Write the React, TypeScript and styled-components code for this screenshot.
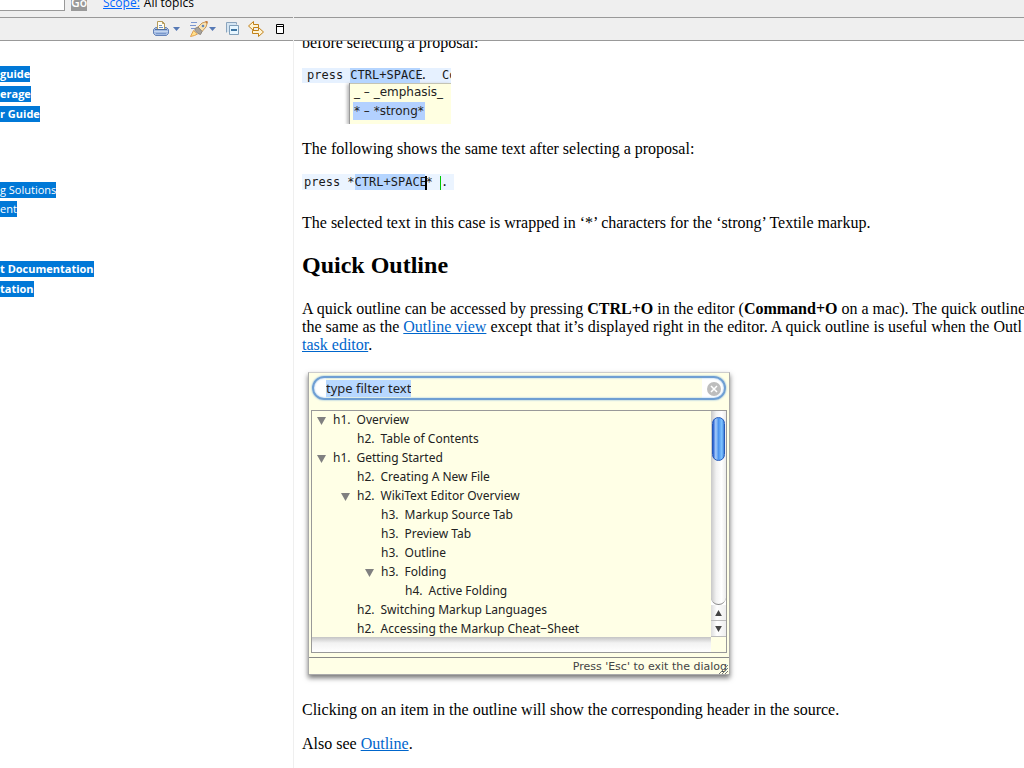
import React from "react";
import styled, { createGlobalStyle, css } from "styled-components";

const uiFont = '"Open Sans", "Noto Sans", sans-serif';
const macFont = '"DejaVu Sans", sans-serif';
const monoFont = '"DejaVu Sans Mono", monospace';

const GlobalStyle = createGlobalStyle`
  * { box-sizing: border-box; }
  body { margin: 0; background: #fff; }
  button { border: 0; padding: 0; background: none; font: inherit; }
`;

const Page = styled.div`
  display: flex;
  flex-direction: column;
  height: 100vh;
  overflow: hidden;
`;

const SearchBar = styled.form`
  display: flex;
  align-items: flex-end;
  flex: none;
  height: 17px;
  padding-bottom: 6px;
  background: #efefef;
  font: 12px/16px ${uiFont};
  color: #000;
`;

const SearchInput = styled.input`
  width: 65px;
  height: 20px;
  border: 1px solid #999;
  border-left: 0;
  background: #fff;
`;

const GoButton = styled.button`
  height: 20px;
  margin: 0 16px 0 6px;
  padding: 3px 0 0;
  background: #999;
  color: #fff;
  font-weight: 600;
`;

const ScopeLink = styled.a`
  margin-right: 4px;
  color: #0066ff;
`;

const Panes = styled.div`
  display: flex;
  flex: 1;
  min-height: 0;
`;

const NavPane = styled.aside`
  display: flex;
  flex-direction: column;
  flex: none;
  width: 294px;
  border-right: 1px solid #efefef;
`;

const ContentPane = styled.div`
  display: flex;
  flex-direction: column;
  flex: 1;
  min-width: 0;
`;

const Toolbar = styled.div`
  display: flex;
  align-items: center;
  justify-content: flex-end;
  flex: none;
  height: 24px;
  padding-right: 9px;
  border: solid #999;
  border-width: 1px 0;
  background: #efefef;
`;

const ToolButton = styled.button<{ $gap?: number }>`
  display: flex;
  align-items: center;
  margin-left: ${(p) => p.$gap ?? 8}px;
`;

const Topics = styled.nav`
  flex: 1;
  padding-top: 25px;
  overflow: hidden;
  font: 11px/16px ${uiFont};
`;

const TopicGroup = styled.ul<{ $strong?: boolean }>`
  display: flex;
  flex-direction: column;
  align-items: flex-start;
  gap: ${(p) => (p.$strong ? 4 : 3)}px;
  margin: 0 0 ${(p) => (p.$strong ? 60 : 44)}px;
  padding: 0;
  list-style: none;
  font-weight: ${(p) => (p.$strong ? 700 : 400)};
`;

const TopicLink = styled.a`
  display: block;
  background: #0078d7;
  color: #fff;
  text-decoration: none;
  white-space: pre;
`;

const Article = styled.main`
  flex: 1;
  min-height: 0;
  padding: 0 0 16px 8px;
  overflow: hidden;
  font: 16px/18px "Liberation Serif", serif;
  color: #000;
  white-space: nowrap;
`;

const ScrolledText = styled.div`
  margin-top: -7px;
`;

const Para = styled.p`
  margin: 0 0 16px;
`;

const Heading = styled.h2`
  margin: 19px 0 21px;
  font-size: 24px;
  line-height: 28px;
`;

const TextLink = styled.a`
  color: #0066cc;
`;

const Proposal = styled.figure`
  width: 149px;
  height: 56px;
  margin: 0 0 16px;
  overflow: hidden;
`;

const CodeLine = styled.div<{ $after?: boolean }>`
  height: 15px;
  padding-left: 5px;
  background: #e6f1ff;
  font: 12px/15px ${monoFont};
  color: #1a1a1a;
  white-space: pre;
  ${(p) =>
    p.$after &&
    css`
      width: 152px;
      height: 16px;
      margin-bottom: 24px;
      padding-left: 2px;
      background: #ebf4ff;
      line-height: 16px;
    `}
`;

const Selected = styled.span`
  display: inline-block;
  width: 70px;
  background: #b5d5ff;
`;

const Caret = styled.span`
  display: inline-block;
  width: 2px;
  height: 14px;
  margin-right: -1px;
  background: #000;
  vertical-align: middle;
`;

const EndMark = styled.span`
  display: inline-block;
  width: 1px;
  height: 14px;
  background: #00c800;
  vertical-align: middle;
`;

const ProposalList = styled.ul`
  display: flex;
  flex-direction: column;
  align-items: flex-start;
  height: 41px;
  margin: 0 0 0 47px;
  padding: 0 0 0 3px;
  border-left: 1px solid #999;
  box-shadow: -2px 1px 3px #bbb, inset 0 1px #c4c4b4;
  background: #ffffe1;
  list-style: none;
  font: 12px/19px ${macFont};
  color: #222;
`;

const ProposalItem = styled.li<{ $active?: boolean }>`
  padding: 0 1px;
  background: ${(p) => (p.$active ? "#b3d1ff" : "transparent")};
  line-height: ${(p) => (p.$active ? 18 : 19)}px;
`;

const Dialog = styled.section`
  width: 422px;
  margin: 18px 0 26px 6px;
  border: 1px solid #aaa;
  border-top-color: #ccc;
  background: #ffffe6;
  box-shadow: 0 3px 5px #777;
  font: 12px/19px "Noto Sans", sans-serif;
  color: #222;
`;

const Filter = styled.label`
  display: flex;
  align-items: center;
  justify-content: space-between;
  height: 24px;
  margin: 3px 3px 10px;
  padding: 1px 3px 0 12px;
  border: 2px solid #6f9fd3;
  border-radius: 12px;
  background: linear-gradient(90deg, #fff 12px, #ffffe6 12px calc(100% - 22px), #fff calc(100% - 22px));
  box-shadow: 0 0 2px #6aa5dd, inset 0 0 2px #8bbbe8;
`;

const FilterInput = styled.input`
  field-sizing: content;
  height: 17px;
  padding: 0;
  border: 0;
  background: #b8d8ff;
  font: 13px/17px "Noto Sans", sans-serif;
  color: #222;
`;

const ClearButton = styled.button`
  display: flex;
`;

const OutlineFrame = styled.div`
  height: 243px;
  margin: 0 2px 4px;
  border: 1px solid #999;
`;

const OutlineBody = styled.div`
  display: flex;
  height: 226px;
`;

const Tree = styled.ul`
  flex: 1;
  margin: 0;
  padding: 0;
  overflow: hidden;
  list-style: none;
`;

const TreeRow = styled.li<{ $level: number }>`
  display: flex;
  height: 19px;
  padding-left: ${(p) => (p.$level - 1) * 24}px;
  line-height: 17px;
`;

const Marker = styled.span`
  margin-right: 6px;
`;

const Toggle = styled.button`
  display: flex;
  align-items: center;
  justify-content: center;
  width: 19px;
  height: 19px;
  margin-right: 2px;
`;

const ToggleSpace = styled.span`
  width: 21px;
`;

const Track = styled.div`
  display: flex;
  flex-direction: column;
  width: 15px;
  background: #fff;
`;

const TrackRun = styled.div`
  flex: 1;
  padding: 6px 1px 0;
  border-radius: 0 0 8px 8px;
  border-bottom: 1px solid #888;
  background: linear-gradient(90deg, #c8c8c8, #f2f2f2 35%, #fff 70%, #ececec);
`;

const Thumb = styled.div`
  width: 13px;
  height: 44px;
  border: 1px solid #2459b8;
  border-radius: 7px;
  background: linear-gradient(90deg, #1d55cf, #a8cdfb 25%, #4c94ee 50%, #7fc4ff 80%, #3f7fd8);
`;

const StepButton = styled.button`
  display: flex;
  align-items: center;
  justify-content: center;
  height: 16px;
  border-bottom: 1px solid #bbb;
  background: linear-gradient(90deg, #ddd, #fff 40%, #eee);
`;

const BottomTrack = styled.div`
  height: 15px;
  margin-right: 15px;
  background: linear-gradient(#c4c4c4, #f2f2f2 40%, #fff);
`;

const DialogFooter = styled.footer`
  display: flex;
  align-items: center;
  justify-content: flex-end;
  height: 17px;
  padding-right: 1px;
  border-top: 1px solid #888;
  font: 11px/16px ${macFont};
  color: #444;
`;

const FooterText = styled.span`
  padding-top: 2px;
`;

const Grip = styled.svg`
  flex: none;
  align-self: flex-end;
  margin-left: -9px;
`;

const DropArrow = () => (
  <svg width="7" height="4" viewBox="0 0 7 4" aria-hidden="true">
    <path d="M0 0h7L3.500 4z" fill="#5679b5" />
  </svg>
);

const PrintIcon = () => (
  <svg width="16" height="16" viewBox="0 0 16 16" aria-hidden="true">
    <path d="M2.500 6.500h11l2 2v4l-2 2h-11l-2-2v-4z" fill="#a3bbe2" stroke="#6583b8" />
    <path d="M1 10.500h14" stroke="#c5d6ef" />
    <path d="M4.500 8.500v-8h5l2 2v6z" fill="#fffdf0" stroke="#b49a5b" />
    <path d="M9.500 .5v2h2" fill="none" stroke="#b49a5b" />
    <path d="M6 4.500h3M6 6.500h4" stroke="#6d91c8" />
    <path d="M2 8.500h12" stroke="#506e9e" />
    <path d="M3 12.500h10" stroke="#7a98cb" />
  </svg>
);

const RocketIcon = () => (
  <svg width="18" height="16" viewBox="0 0 18 16" aria-hidden="true">
    <path d="M1 1.500h6M0 4.500h6M1 7.500h4" stroke="#7b97d0" />
    <path d="M3.500 9.500l4 3.500-3 1.500-4 1z" fill="#ffe08a" stroke="#e0a050" />
    <path d="M8 6l4-4 5-1.500.5.5-1.500 5-4 4.500z" fill="#f8e2b0" stroke="#c99a5a" />
    <path d="M15 .500l2.500-.5-.5 3z" fill="#c87b3c" />
    <path d="M5 7.500l3-1.500 4 4.500-1.500 3-2.500-1-3-3z" fill="#a9a49c" stroke="#8c8680" />
    <circle cx="13" cy="5" r="1.300" fill="#5f86bd" />
  </svg>
);

const CollapseIcon = () => (
  <svg width="14" height="14" viewBox="0 0 14 14" aria-hidden="true">
    <path d="M.5 10.500V.5h10v2" fill="none" stroke="#8aa4bd" />
    <path d="M1 10V1h9v2H3v7z" fill="#d5e5f2" />
    <path d="M3.500 3.500h9v9h-9z" fill="#e7f6ff" stroke="#819fb9" />
    <path d="M5 8h6" stroke="#064a83" strokeWidth="1.500" />
  </svg>
);

const SyncIcon = () => (
  <svg width="16" height="16" viewBox="0 0 16 16" aria-hidden="true">
    <path
      d="M5.500 .5v3h5v3h-5v3l-5-4.500zM10.500 6.500l5 4.500-5 4.500v-3h-6v-3h6z"
      fill="#fff4d5"
      stroke="#c18118"
      strokeLinejoin="round"
    />
  </svg>
);

const MaximizeIcon = () => (
  <svg width="8" height="10" viewBox="0 0 8 10" aria-hidden="true">
    <path d="M.5 .5h7v9h-7zM1 2.500h6" fill="#fff" stroke="#000" />
  </svg>
);

const Triangle = ({ up = false, size = 9, color = "#808080" }) => (
  <svg width={size} height={size - 1} viewBox="0 0 9 8" aria-hidden="true">
    <path d={up ? "M4.500 0L9 8H0z" : "M0 0h9L4.500 8z"} fill={color} />
  </svg>
);

const outline = [
  { level: 1, text: "Overview", open: true },
  { level: 2, text: "Table of Contents" },
  { level: 1, text: "Getting Started", open: true },
  { level: 2, text: "Creating A New File" },
  { level: 2, text: "WikiText Editor Overview", open: true },
  { level: 3, text: "Markup Source Tab" },
  { level: 3, text: "Preview Tab" },
  { level: 3, text: "Outline" },
  { level: 3, text: "Folding", open: true },
  { level: 4, text: "Active Folding" },
  { level: 2, text: "Switching Markup Languages" },
  { level: 2, text: "Accessing the Markup Cheat−Sheet" },
];

const topicGroups = [
  { strong: true, items: ["guide", "erage", "r Guide"] },
  { strong: false, items: ["g Solutions", "ent"] },
  { strong: true, items: ["t Documentation", "tation"] },
];

export default function App() {
  return (
    <Page>
      <GlobalStyle />
      <SearchBar onSubmit={(e) => e.preventDefault()}>
        <SearchInput aria-label="Search" />
        <GoButton type="submit">Go</GoButton>
        <ScopeLink href="#scope">Scope:</ScopeLink>
        <span>All topics</span>
      </SearchBar>
      <Panes>
        <NavPane>
          <Toolbar>
            <ToolButton aria-label="Print"><PrintIcon /></ToolButton>
            <ToolButton $gap={4} aria-label="Print options"><DropArrow /></ToolButton>
            <ToolButton $gap={10} aria-label="Search topics"><RocketIcon /></ToolButton>
            <ToolButton $gap={1} aria-label="Search options"><DropArrow /></ToolButton>
            <ToolButton $gap={10} aria-label="Collapse all"><CollapseIcon /></ToolButton>
            <ToolButton aria-label="Link with contents"><SyncIcon /></ToolButton>
            <ToolButton $gap={12} aria-label="Maximize"><MaximizeIcon /></ToolButton>
          </Toolbar>
          <Topics aria-label="Contents">
            {topicGroups.map((group) => (
              <TopicGroup key={group.items[0]} $strong={group.strong}>
                {group.items.map((item) => (
                  <li key={item}><TopicLink href="#topic">{item}</TopicLink></li>
                ))}
              </TopicGroup>
            ))}
          </Topics>
        </NavPane>
        <ContentPane>
          <Toolbar />
          <Article>
            <ScrolledText>
              <Para>before selecting a proposal:</Para>
              <Proposal>
                <CodeLine>press <Selected>CTRL+SPACE</Selected>.  Co</CodeLine>
                <ProposalList>
                  <ProposalItem>_ – _emphasis_</ProposalItem>
                  <ProposalItem $active>* – *strong*</ProposalItem>
                </ProposalList>
              </Proposal>
              <Para>The following shows the same text after selecting a proposal:</Para>
              <CodeLine $after>
                press *<Selected>CTRL+SPACE</Selected><Caret />* <EndMark />.
              </CodeLine>
              <Para>The selected text in this case is wrapped in ‘*’ characters for the ‘strong’ Textile markup.</Para>
              <Heading>Quick Outline</Heading>
              <Para>
                A quick outline can be accessed by pressing <b>CTRL+O</b> in the editor (<b>Command+O</b> on a mac). The quick outline
                <br />
                the same as the <TextLink href="#outline">Outline view</TextLink> except that it’s displayed right in the editor. A quick outline is useful when the Outl
                <br />
                <TextLink href="#task-editor">task editor</TextLink>.
              </Para>
              <Dialog aria-label="Quick outline">
                <Filter>
                  <FilterInput defaultValue="type filter text" aria-label="Filter" />
                  <ClearButton aria-label="Clear">
                    <svg width="14" height="14" viewBox="0 0 14 14" aria-hidden="true">
                      <circle cx="7" cy="7" r="7" fill="#bdbdbd" />
                      <path d="M4 4l6 6M10 4l-6 6" stroke="#fff" strokeWidth="1.500" />
                    </svg>
                  </ClearButton>
                </Filter>
                <OutlineFrame>
                  <OutlineBody>
                    <Tree>
                      {outline.map((row) => (
                        <TreeRow key={row.text} $level={row.level}>
                          {row.open ? (
                            <Toggle aria-label="Collapse"><Triangle /></Toggle>
                          ) : (
                            <ToggleSpace />
                          )}
                          <Marker>h{row.level}.</Marker>
                          {row.text}
                        </TreeRow>
                      ))}
                    </Tree>
                    <Track>
                      <TrackRun><Thumb /></TrackRun>
                      <StepButton aria-label="Scroll up"><Triangle up size={7} color="#444" /></StepButton>
                      <StepButton aria-label="Scroll down"><Triangle size={7} color="#444" /></StepButton>
                    </Track>
                  </OutlineBody>
                  <BottomTrack />
                </OutlineFrame>
                <DialogFooter>
                  <FooterText>Press 'Esc' to exit the dialog</FooterText>
                  <Grip width="10" height="10" viewBox="0 0 10 10" aria-hidden="true">
                    <path d="M1 10l9-9M4 10l6-6M7 10l3-3" stroke="#777" />
                  </Grip>
                </DialogFooter>
              </Dialog>
              <Para>Clicking on an item in the outline will show the corresponding header in the source.</Para>
              <Para>Also see <TextLink href="#outline">Outline</TextLink>.</Para>
            </ScrolledText>
          </Article>
        </ContentPane>
      </Panes>
    </Page>
  );
}
